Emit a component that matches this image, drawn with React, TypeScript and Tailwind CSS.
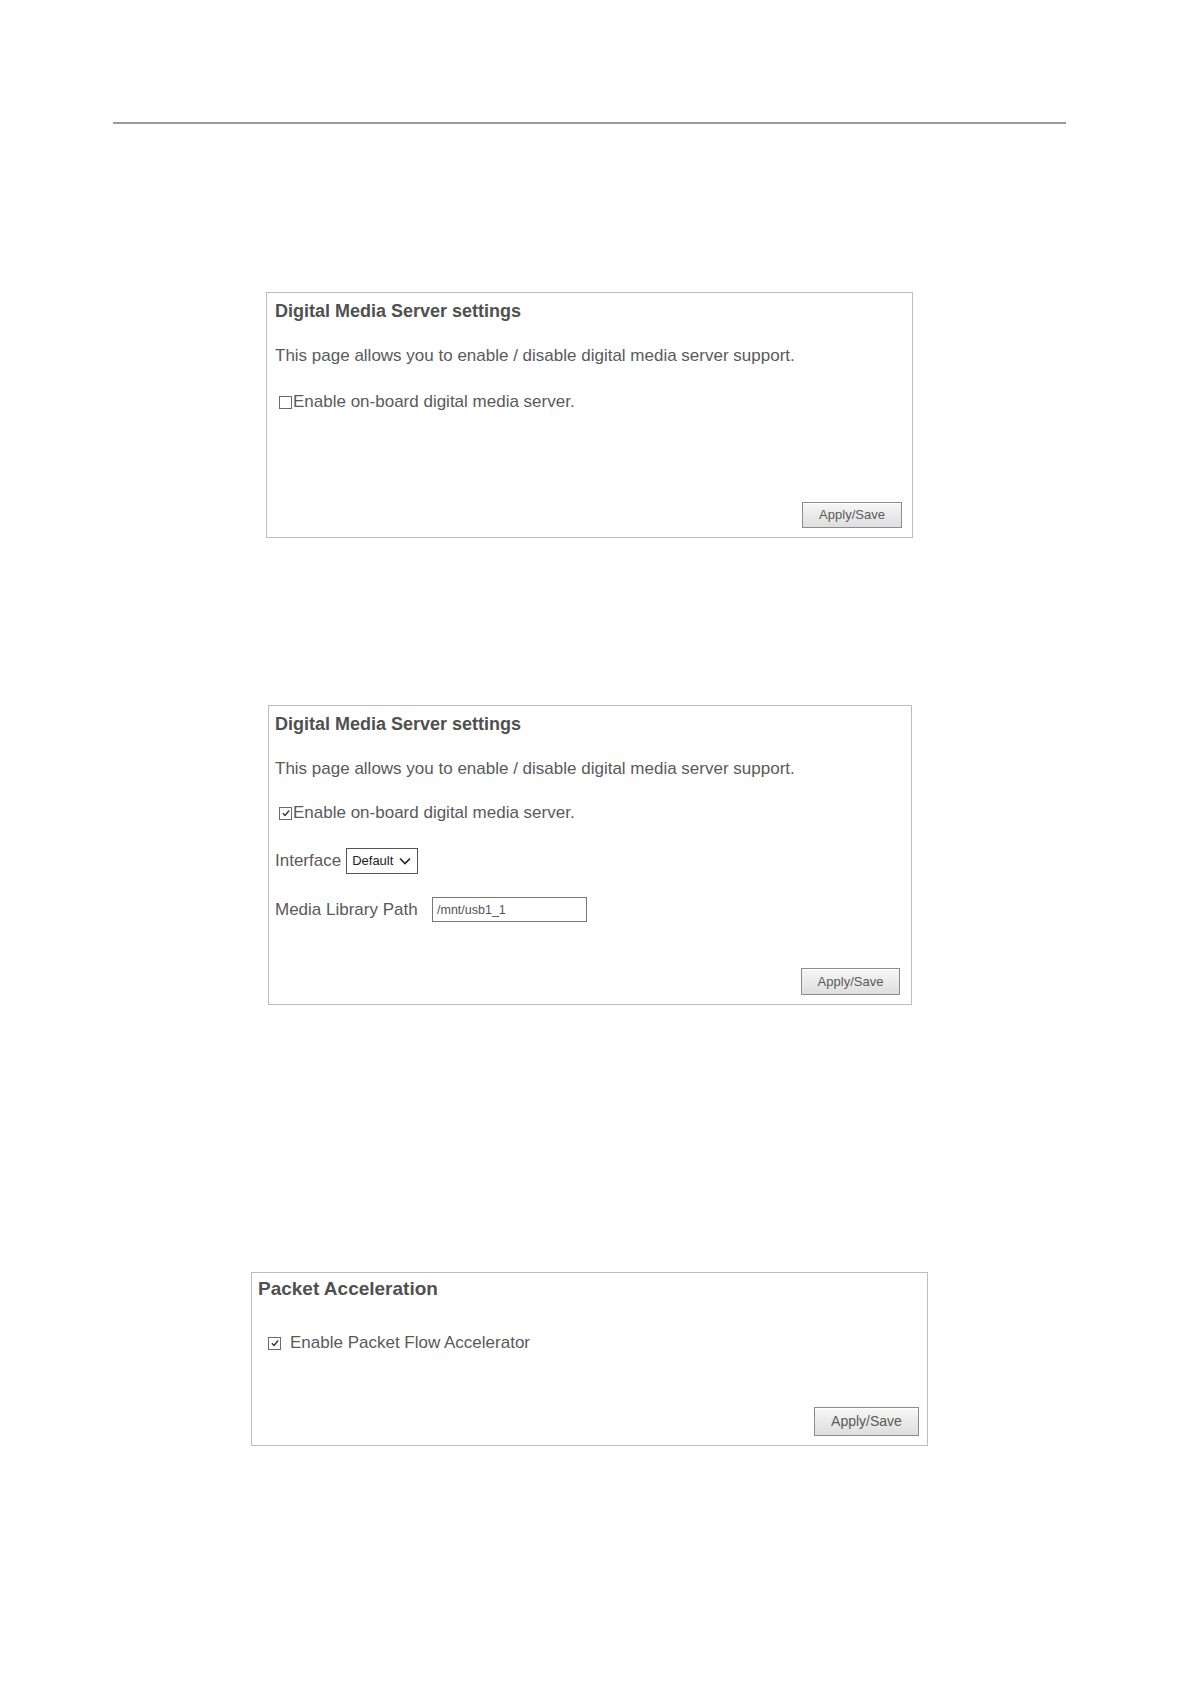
import React from 'react';

function Checkbox({ checked }: { checked: boolean }) {
  return (
    <span className="inline-flex h-[13px] w-[13px] shrink-0 items-center justify-center border border-[#6b6b6b] bg-white">
      {checked && (
        <svg viewBox="0 0 12 12" className="h-[10px] w-[10px]">
          <path d="M2.2 6.3 L4.8 8.9 L9.8 3" fill="none" stroke="#333" strokeWidth="1.7" />
        </svg>
      )}
    </span>
  );
}

function ApplyButton({ className }: { className: string }) {
  return (
    <button
      type="button"
      className={`mt-auto self-end border border-[#8c8c8c] bg-gradient-to-b from-[#f7f7f7] to-[#dedede] text-[#5a5a5a] shadow-[inset_0_1px_0_#fff] ${className}`}
    >
      Apply/Save
    </button>
  );
}

function MediaServerBox({ enabled }: { enabled: boolean }) {
  return (
    <div
      className={`flex flex-col border border-[#bdbdbd] bg-white pt-[7px] ${
        enabled ? 'ml-[268px] mt-[167px] h-[300px] w-[644px] pl-[6px]' : 'ml-[266px] mt-[168px] h-[246px] w-[647px] pl-[8px]'
      }`}
    >
      <div className="text-[18px] font-bold leading-[22px] text-[#505050]">Digital Media Server settings</div>
      <div className="mt-[24px] text-[17px] leading-[20px] text-[#5a5a5a]">
        This page allows you to enable / disable digital media server support.
      </div>
      <label
        className={`flex items-center gap-[1px] pl-[4px] text-[17px] leading-[20px] text-[#5a5a5a] ${
          enabled ? 'mt-[24px]' : 'mt-[26px]'
        }`}
      >
        <Checkbox checked={enabled} />
        <span>Enable on-board digital media server.</span>
      </label>

      {enabled && (
        <>
          <div className="mt-[25px] flex h-[26px] items-center gap-[5px] text-[17px] leading-[20px] text-[#5a5a5a]">
            <span>Interface</span>
            <div className="flex h-[26px] w-[72px] items-center justify-between border border-[#555] bg-white pl-[5px] pr-[6px] text-[13px] text-[#222]">
              <span>Default</span>
              <svg viewBox="0 0 12 8" className="h-[8px] w-[12px]">
                <path d="M1 1.5 L6 6.5 L11 1.5" fill="none" stroke="#222" strokeWidth="1.6" />
              </svg>
            </div>
          </div>
          <div className="mt-[23px] flex h-[25px] items-center text-[17px] leading-[20px] text-[#5a5a5a]">
            <span className="w-[157px]">Media Library Path</span>
            <div className="flex h-[25px] w-[155px] items-center border border-[#777] bg-white pl-[4px] text-[12.5px] text-[#555]">
              /mnt/usb1_1
            </div>
          </div>
        </>
      )}

      <ApplyButton
        className={
          enabled
            ? 'mb-[9px] mr-[11px] h-[27px] w-[99px] text-[13px]'
            : 'mb-[9px] mr-[10px] h-[26px] w-[100px] text-[13px]'
        }
      />
    </div>
  );
}

function PacketAccelerationBox() {
  return (
    <div className="ml-[251px] mt-[267px] flex h-[174px] w-[677px] flex-col border border-[#bdbdbd] bg-white pl-[6px] pt-[4px]">
      <div className="text-[19px] font-bold leading-[24px] text-[#505050]">Packet Acceleration</div>
      <label className="mt-[32px] flex items-center gap-[9px] pl-[10px] text-[17px] leading-[20px] text-[#5a5a5a]">
        <Checkbox checked />
        <span>Enable Packet Flow Accelerator</span>
      </label>
      <ApplyButton className="mb-[9px] mr-[8px] h-[29px] w-[105px] text-[14px]" />
    </div>
  );
}

export default function App() {
  return (
    <div className="min-h-[1684px] w-[1190px] bg-white pt-[122px] font-['Liberation_Sans',Arial,sans-serif]">
      <div className="ml-[113px] h-[2px] w-[953px] bg-[#9a9a9a]" />
      <MediaServerBox enabled={false} />
      <MediaServerBox enabled />
      <PacketAccelerationBox />
    </div>
  );
}
